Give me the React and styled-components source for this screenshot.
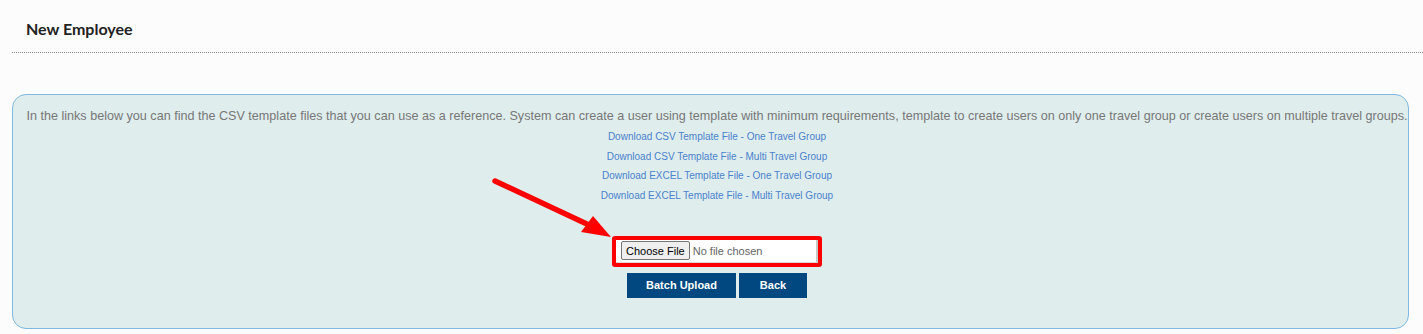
import React from 'react';
import styled, { createGlobalStyle } from 'styled-components';

const GlobalStyle = createGlobalStyle`
  body {
    margin: 0;
    background: #fcfcfc;
    font-family: "Liberation Sans", Arial, sans-serif;
  }
`;

const links = [
  'Download CSV Template File - One Travel Group',
  'Download CSV Template File - Multi Travel Group',
  'Download EXCEL Template File - One Travel Group',
  'Download EXCEL Template File - Multi Travel Group',
];

const App = () => {
  return (
    <Page>
      <GlobalStyle />
      <Header>
        <Title>New Employee</Title>
      </Header>
      <Panel>
        <Intro>
          In the links below you can find the CSV template files that you can use as a reference. System can create a user using template with minimum requirements, template to create users on only one travel group or create users on multiple travel groups.
        </Intro>
        <LinkList>
          {links.map((l) => (
            <TemplateLink key={l} href="#">{l}</TemplateLink>
          ))}
        </LinkList>
        <UploadRow>
          <Highlight>
            <Arrow width="130" height="70" viewBox="0 0 130 70">
              <line x1="9" y1="7" x2="103" y2="51" stroke="#ff0000" strokeWidth="5.5" strokeLinecap="round" />
              <polygon points="125,63 95,58 107,42" fill="#ff0000" />
            </Arrow>
            <FileBox>
              <FileInput type="file" />
            </FileBox>
          </Highlight>
        </UploadRow>
        <ButtonRow>
          <ActionButton width="109px">Batch Upload</ActionButton>
          <ActionButton width="68px">Back</ActionButton>
        </ButtonRow>
      </Panel>
    </Page>
  );
};

const Page = styled.div`
  width: 1423px;
  height: 334px;
  overflow: hidden;
`;

const Header = styled.div`
  margin-left: 12px;
  height: 53px;
  border-bottom: 1px dotted #8a8a8a;
  display: flex;
  align-items: center;
  padding: 0 0 4px 14px;
  box-sizing: border-box;
`;

const Title = styled.h1`
  margin: 0;
  font-family: Lato, "Open Sans", sans-serif;
  font-weight: 700;
  font-size: 16px;
  color: #222;
  padding-top: 8px;
`;

const Panel = styled.div`
  margin: 41px 14px 0 12px;
  height: 235px;
  box-sizing: border-box;
  background: #dfeded;
  border: 1px solid #7fb9e0;
  border-radius: 14px;
  padding: 13px 0 0 13px;
  text-align: center;
`;

const Intro = styled.p`
  margin: 0;
  font-size: 12.6px;
  line-height: 17px;
  color: #777;
  white-space: nowrap;
`;

const LinkList = styled.div`
  margin-top: 2px;
  display: flex;
  flex-direction: column;
  align-items: center;
`;

const TemplateLink = styled.a`
  font-size: 10px;
  line-height: 19.7px;
  color: #4a82cc;
  text-decoration: none;
`;

const UploadRow = styled.div`
  margin-top: 30px;
  display: flex;
  justify-content: center;
`;

const Highlight = styled.div`
  position: relative;
  width: 210px;
  height: 31px;
  box-sizing: border-box;
  border: 4px solid #ff0000;
  border-radius: 3px;
`;

const Arrow = styled.svg`
  position: absolute;
  left: -130px;
  top: -66px;
`;

const FileBox = styled.div`
  height: 100%;
  background: #fff;
  border-right: 2px solid #c8c8c8;
  border-bottom: 1px solid #d8d8d8;
  box-sizing: border-box;
  display: flex;
  align-items: center;
  padding-left: 5px;
`;

const FileInput = styled.input`
  font-family: "Liberation Sans", Arial, sans-serif;
  font-size: 11px;
  color: #666;
  width: 190px;

  &::file-selector-button {
    font-family: "Liberation Sans", Arial, sans-serif;
    font-size: 11px;
    color: #000;
    background: #efefef;
    border: 1px solid #767676;
    border-radius: 2px;
    height: 19px;
    padding: 0 4px;
    margin-right: 3px;
  }
`;

const ButtonRow = styled.div`
  margin-top: 6px;
  display: flex;
  justify-content: center;
  gap: 3px;
`;

const ActionButton = styled.button`
  width: ${(p) => p.width};
  height: 25px;
  background: #00487f;
  color: #fff;
  border: none;
  font-family: "Liberation Sans", Arial, sans-serif;
  font-weight: 700;
  font-size: 11px;
  padding: 0;
`;

export default App;
